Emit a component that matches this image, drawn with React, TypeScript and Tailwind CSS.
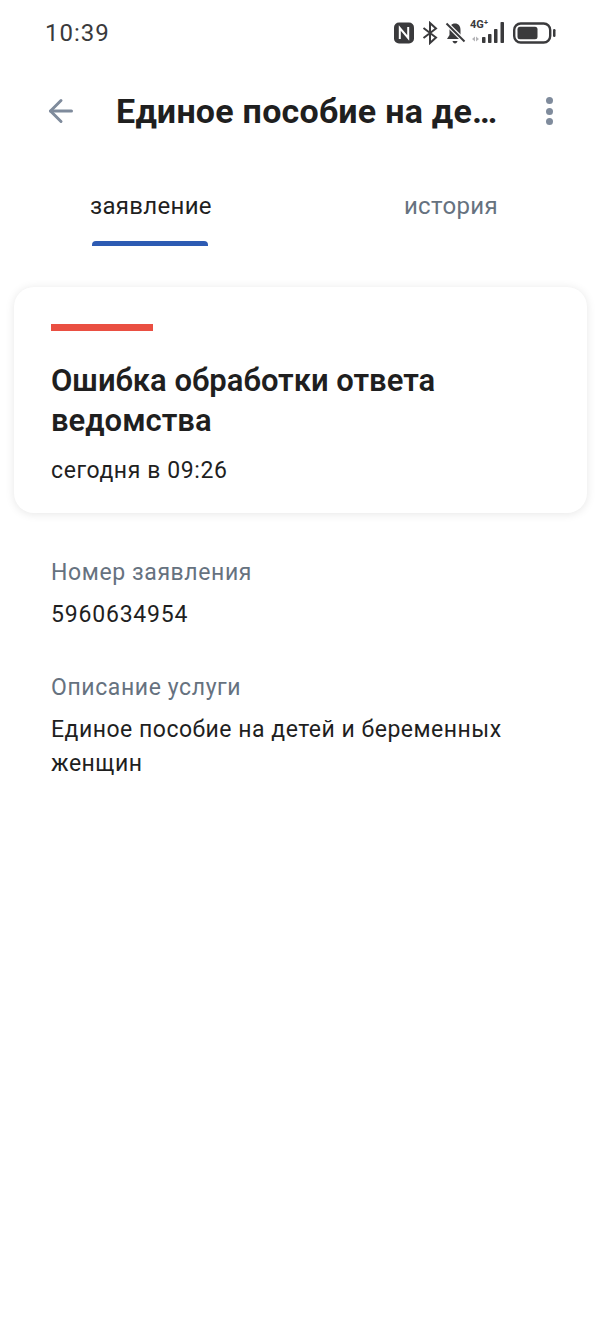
import React from 'react';
import { ArrowLeft } from 'lucide-react';

const StatusIcons = () => (
  <div className="flex items-center">
    {/* NFC */}
    <svg width="22" height="24" viewBox="0 0 22 24" fill="none">
      <rect x="1" y="1.500" width="20" height="21" rx="5" fill="#3a3a3c" />
      <path d="M6.800 18V7L15.200 17V6" stroke="#fff" strokeWidth="2" fill="none" />
    </svg>
    {/* bluetooth */}
    <svg className="ml-[7px]" width="16" height="24" viewBox="0 0 16 24" fill="none" stroke="#3a3a3c" strokeWidth="2">
      <path d="M1.500 7L14 16.500L8 22V2L14 7.500L1.500 17" />
    </svg>
    {/* bell muted */}
    <svg className="ml-[6px]" width="22" height="24" viewBox="0 0 22 24" fill="none">
      <path d="M11 2.500C7.500 2.500 5.500 5 5.500 9V14L3 18H19L16.500 14V9C16.500 5 14.500 2.500 11 2.500Z" fill="#3a3a3c" />
      <path d="M8.500 20H13.500C13.200 21.500 12.200 22.500 11 22.500C9.800 22.500 8.800 21.500 8.500 20Z" fill="#3a3a3c" />
      <path d="M2 2L21 21" stroke="#fff" strokeWidth="4.500" />
      <path d="M2.500 2.500L20.500 20.500" stroke="#3a3a3c" strokeWidth="2" />
    </svg>
    {/* signal */}
    <div className="relative ml-[4px] w-[38px] h-[24px]">
      <span className="absolute left-0 top-[-2px] text-[11px] leading-[12px] font-bold text-[#3a3a3c]">4G⁺</span>
      <svg className="absolute left-0 top-0" width="38" height="24" viewBox="0 0 38 24" fill="#3a3a3c">
        <path d="M2 18L5 15.500V20.500Z M9 18L6 15.500V20.500Z" fill="#b5b5b8" />
        <rect x="12" y="16" width="3.500" height="6" rx="0.800" />
        <rect x="18" y="13" width="3.500" height="9" rx="0.800" />
        <rect x="24" y="8" width="3.500" height="14" rx="0.800" />
        <rect x="30.500" y="1" width="3.500" height="21" rx="0.800" />
      </svg>
    </div>
    {/* battery */}
    <svg className="ml-[5px]" width="43" height="22" viewBox="0 0 43 22" fill="none">
      <rect x="1.200" y="1.500" width="36" height="19" rx="6.500" stroke="#3a3a3c" strokeWidth="2.400" />
      <rect x="4.500" y="4.800" width="20" height="12.400" rx="2.500" fill="#3a3a3c" />
      <rect x="40" y="7" width="2.500" height="8" rx="1.200" fill="#3a3a3c" />
    </svg>
  </div>
);

const Field: React.FC<{ label: string; value: string; valueClass?: string; className?: string }> = ({ label, value, valueClass, className }) => (
  <div className={className}>
    <div className="text-[23px] leading-[28px] text-[#66727f] tracking-[0.6px]">{label}</div>
    <div className={`mt-[11px] text-[23px] leading-[34px] text-[#1f1f1f] ${valueClass}`}>{value}</div>
  </div>
);

export default function App() {
  return (
    <div className="w-[600px] h-[1344px] bg-white overflow-hidden [font-family:Roboto,sans-serif]">
      {/* status bar */}
      <div className="h-[66px] pl-[45px] pr-[44px] flex items-center justify-between">
        <span className="text-[24px] text-[#3a3a3c] tracking-[1px]">10:39</span>
        <StatusIcons />
      </div>

      {/* header */}
      <div className="h-[90px] flex items-center pl-[43px] pr-[47px]">
        <ArrowLeft size={36} strokeWidth={2} className="text-[#7f8b9c] shrink-0" />
        <h1 className="ml-[37px] w-[386px] text-[34px] font-bold text-[#1f1f1f] tracking-[0.25px] truncate">Единое пособие на детей и беременных женщин</h1>
        <div className="ml-auto flex flex-col gap-[3.500px]">
          <span className="w-[7px] h-[7px] rounded-full bg-[#7f8b9c]" />
          <span className="w-[7px] h-[7px] rounded-full bg-[#7f8b9c]" />
          <span className="w-[7px] h-[7px] rounded-full bg-[#7f8b9c]" />
        </div>
      </div>

      {/* tabs */}
      <div className="flex h-[90px] pl-[90px] pr-[102px] justify-between">
        <div className="flex flex-col justify-between pt-[34px] w-[122px]">
          <span className="text-[24px] leading-[32px] text-[#1f1f1f] tracking-[0.3px]">заявление</span>
          <div className="w-[116px] h-[5px] bg-[#2d5bb3] rounded-t-[4px] ml-[2px]" />
        </div>
        <div className="pt-[34px]">
          <span className="text-[24px] leading-[32px] text-[#66727f] tracking-[0.35px]">история</span>
        </div>
      </div>

      {/* status card */}
      <div className="mx-[14px] mt-[41px] h-[226px] w-[573px] rounded-[20px] bg-white shadow-[0_1px_10px_rgba(0,0,0,0.1)] pl-[37px] pr-[30px] pt-[37px]">
        <div className="w-[102px] h-[7px] bg-[#ea4f42]" />
        <h2 className="mt-[30px] text-[31px] leading-[40px] font-semibold text-[#1f1f1f]">Ошибка обработки ответа ведомства</h2>
        <p className="mt-[13px] text-[23px] leading-[34px] text-[#1f1f1f] tracking-[0.6px]">сегодня в 09:26</p>
      </div>

      {/* details */}
      <div className="px-[51px] pt-[46px]">
        <Field label="Номер заявления" value="5960634954" valueClass="tracking-[0.8px]" />
        <Field className="mt-[42px]" label="Описание услуги" value="Единое пособие на детей и беременных женщин" valueClass="tracking-[0.5px]" />
      </div>
    </div>
  );
}
